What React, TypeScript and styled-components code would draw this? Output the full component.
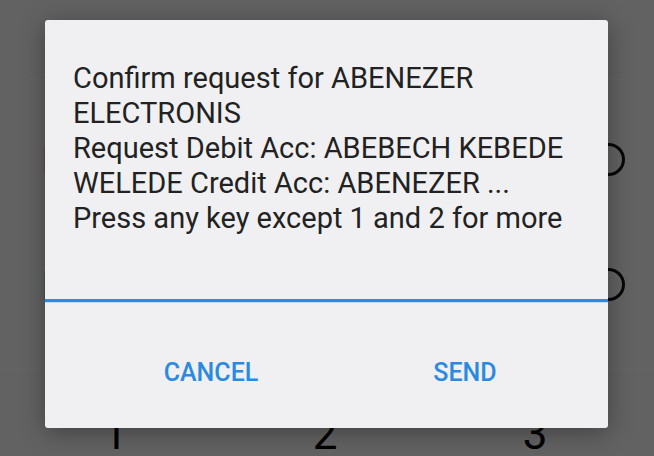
import React from 'react'
import styled, { createGlobalStyle } from 'styled-components'

const GlobalStyle = createGlobalStyle`
  html, body {
    margin: 0;
    padding: 0;
    width: 654px;
    height: 456px;
    overflow: hidden;
    font-family: Roboto, "Noto Sans", sans-serif;
  }
`

const lines = [
  'Confirm request for ABENEZER',
  'ELECTRONIS',
  'Request Debit Acc: ABEBECH KEBEDE',
  'WELEDE Credit Acc: ABENEZER ...',
  'Press any key except 1 and 2 for more',
]

const SimIcon: React.FC<{ color: string }> = ({ color }) => (
  <svg width="26" height="30" viewBox="0 0 26 30">
    <path d="M4 2h12l8 8v18H4z" fill="none" stroke={color} strokeWidth="2.5" />
  </svg>
)

const App: React.FC = () => {
  return (
    <Screen>
      <GlobalStyle />
      <Page>
        <Header />
        <List>
          <Row>
            <SimIcon color="#c62828" />
            <Radio />
          </Row>
          <Row>
            <SimIcon color="#2e7d32" />
            <Radio />
          </Row>
        </List>
        <Keypad>
          <Key>1</Key>
          <Key>2</Key>
          <Key>3</Key>
        </Keypad>
      </Page>
      <Scrim />
      <Dialog>
        <Message>
          {lines.map((l) => (
            <div key={l}>{l}</div>
          ))}
        </Message>
        <InputLine />
        <Buttons>
          <Action>CANCEL</Action>
          <Action>SEND</Action>
        </Buttons>
      </Dialog>
    </Screen>
  )
}

const Screen = styled.div`
  position: relative;
  width: 654px;
  height: 456px;
  overflow: hidden;
  background: #f5f5f5;
`

const Page = styled.div`
  display: flex;
  flex-direction: column;
  height: 100%;
`

const Header = styled.div`
  height: 80px;
  border-bottom: 1px solid #fcfcfc;
  margin: 0 28px;
`

const List = styled.div`
  display: flex;
  flex-direction: column;
  padding-top: 17px;
  height: 292px;
  box-sizing: border-box;
  border-bottom: 1px solid #fcfcfc;
`

const Row = styled.div`
  display: flex;
  align-items: center;
  justify-content: space-between;
  flex: 0 0 125px;
  padding: 0 29px 0 42px;
`

const Radio = styled.div`
  width: 27px;
  height: 27px;
  border: 3px solid #111;
  border-radius: 50%;
`

const Keypad = styled.div`
  display: grid;
  grid-template-columns: repeat(3, 210px);
  padding-left: 10px;
  padding-top: 42px;
`

const Key = styled.div`
  text-align: center;
  font-size: 44px;
  line-height: 44px;
  color: #000;
`

const Scrim = styled.div`
  position: absolute;
  inset: 0;
  background: rgba(0, 0, 0, 0.6);
`

const Dialog = styled.div`
  position: absolute;
  left: 45px;
  top: 20px;
  width: 563px;
  height: 408px;
  display: flex;
  flex-direction: column;
  background: #f0f0f2;
  border-radius: 3px;
  box-shadow: 0 4px 24px rgba(0, 0, 0, 0.35);
`

const Message = styled.div`
  padding: 41px 20px 0 28px;
  height: 279px;
  box-sizing: border-box;
  font-size: 29px;
  line-height: 35px;
  color: #222;
  white-space: nowrap;
`

const InputLine = styled.div`
  height: 3px;
  background: #2d8be4;
  border-bottom: 1px solid #bcd9f4;
`

const Buttons = styled.div`
  display: flex;
  gap: 104px;
  padding: 56px 0 0 91px;
`

const Action = styled.div`
  width: 150px;
  text-align: center;
  font-size: 25px;
  font-weight: 500;
  line-height: 28px;
  color: #2a8ae2;
`

export default App
